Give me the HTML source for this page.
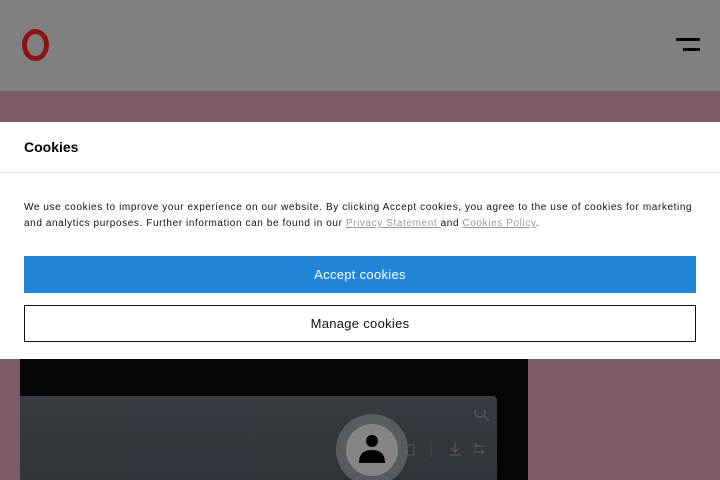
<!DOCTYPE html>
<html><head><style>
*{margin:0;padding:0;box-sizing:border-box}
html,body{width:720px;height:480px;overflow:hidden}
body{background:#7b5c63;font-family:"Liberation Sans",sans-serif;position:relative}
.hdr{position:absolute;left:0;top:0;width:720px;height:91px;background:#808080}
.dev{position:absolute;left:20px;top:300px;width:508px;height:180px;background:#050505;border-radius:0 40px 0 0}
.scr{position:absolute;left:20px;top:396px;width:477px;height:84px;background:linear-gradient(#363b40,#2f3439);border-radius:0 4px 0 0}
.dlg{position:absolute;left:0;top:122px;width:720px;height:237px;background:#fff}
.t{position:absolute;left:24px;top:139px;font-size:14px;font-weight:bold;color:#000}
.ln{position:absolute;left:0;top:172px;width:720px;height:1px;background:#e4e4e4}
.p{position:absolute;left:24px;top:200px;width:674px;font-size:10px;line-height:16px;color:#111;letter-spacing:0.6px}
.p a{color:#999;text-decoration:underline}
.b1{position:absolute;left:24px;top:256px;width:672px;height:37px;background:#2185da;color:#fff;font-size:13px;text-align:center;line-height:37px;letter-spacing:0.3px}
.b2{position:absolute;left:24px;top:305px;width:672px;height:37px;border:1px solid #111;color:#111;font-size:13px;text-align:center;line-height:35px;letter-spacing:0.3px}
</style></head><body>
<div class="hdr"></div>
<svg style="position:absolute;left:20px;top:29px" width="32" height="33"><ellipse cx="15.5" cy="16" rx="11" ry="13.5" fill="none" stroke="#8a1418" stroke-width="5"/></svg>
<div style="position:absolute;left:676px;top:38px;width:24px;height:3px;background:#000"></div>
<div style="position:absolute;left:683px;top:48px;width:17px;height:3px;background:#000"></div>
<div class="dev"></div>
<div class="scr"></div>
<svg style="position:absolute;left:330px;top:410px" width="190" height="70">
<circle cx="42" cy="40" r="36" fill="#6a6e70" opacity=".7"/>
<circle cx="42" cy="40" r="26" fill="#858585"/>
<circle cx="42" cy="31" r="6" fill="#000"/>
<path d="M29 53 Q29 40 42 40 Q55 40 55 53 Z" fill="#000"/>
<circle cx="150" cy="2" r="5" fill="none" stroke="#555" stroke-width="1.5"/>
<line x1="154" y1="6" x2="159" y2="11" stroke="#555" stroke-width="1.5"/>
<rect x="72" y="35" width="12" height="10" fill="none" stroke="#555"/>
<line x1="101" y1="32" x2="101" y2="48" stroke="#444"/>
<path d="M125 33v8M121 38l4 4 4-4M119 45h12" stroke="#555" fill="none" stroke-width="1.3"/>
<path d="M143 36h12M143 42h12M146 33v6M152 39v6" stroke="#555" fill="none" stroke-width="1.3"/>
</svg>
<div class="dlg"></div>
<div class="t">Cookies</div>
<div class="ln"></div>
<div class="p">We use cookies to improve your experience on our website. By clicking Accept cookies, you agree to the use of cookies for marketing and analytics purposes. Further information can be found in our <a>Privacy Statement </a> and <a>Cookies Policy</a>.</div>
<div class="b1">Accept cookies</div>
<div class="b2">Manage cookies</div>
</body></html>
